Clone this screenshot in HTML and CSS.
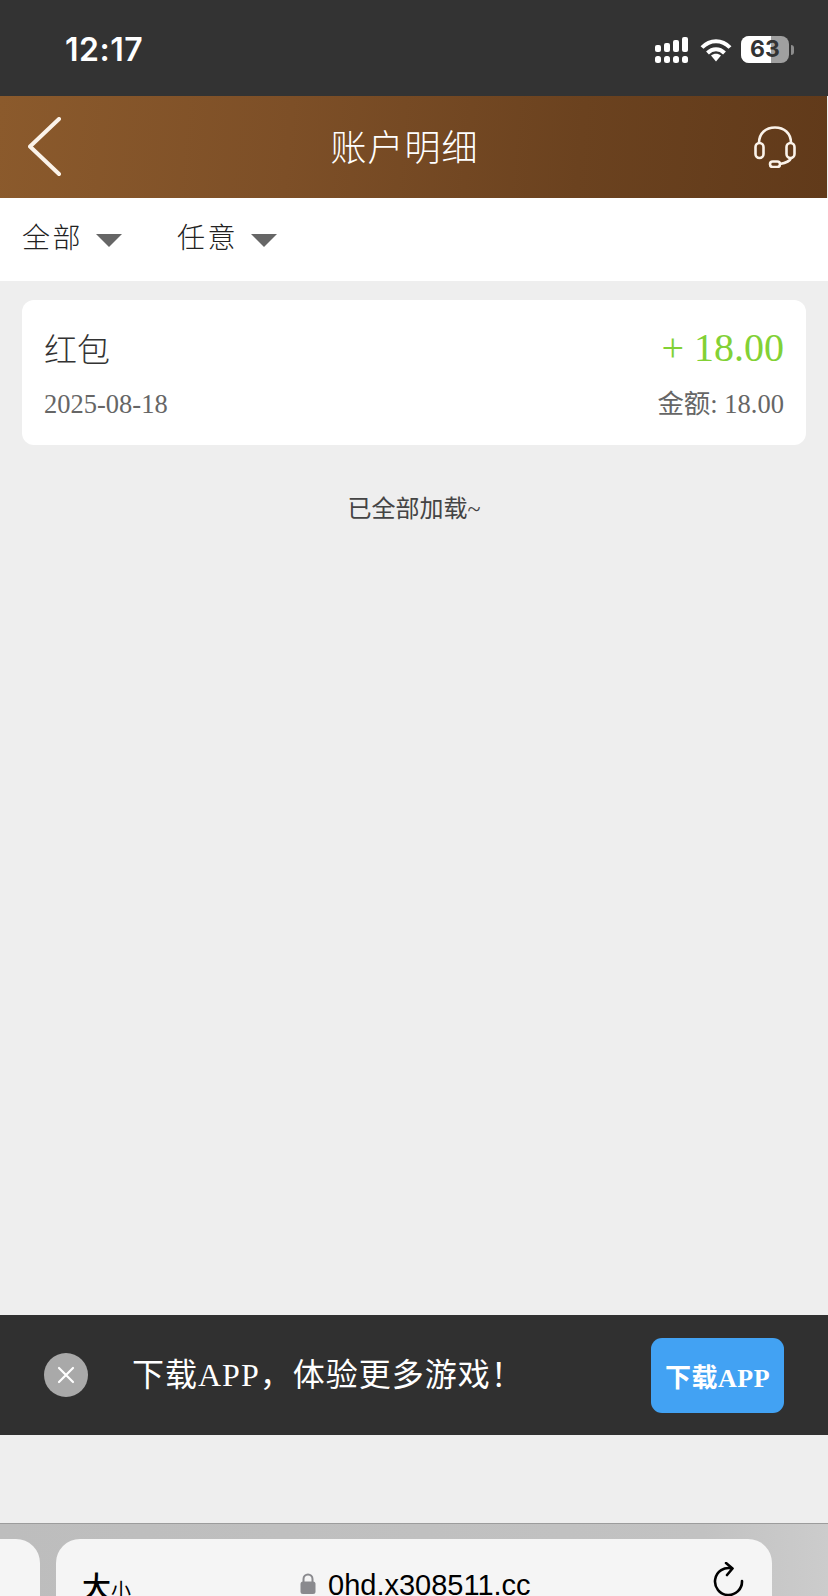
FILE: index.html
```html
<!DOCTYPE html>
<html lang="zh-CN">
<head>
  <meta charset="UTF-8" />
  <meta name="viewport" content="width=device-width, initial-scale=1.0"/>
  <title>账户明细</title>
  <link rel="stylesheet" href="styles.css">
</head>
<body>

  <!-- Phone status bar -->
  <div class="status-bar">
    <span class="time">12:17</span>
    <div class="status-icons">
      <svg class="icon-signal" width="33" height="26" viewBox="0 0 33 26" fill="#fff">
        <rect x="0" y="8" width="6" height="7" rx="2"/>
        <rect x="9" y="6" width="6" height="9" rx="2"/>
        <rect x="18" y="3" width="6" height="12" rx="2"/>
        <rect x="27" y="0" width="6" height="15" rx="2"/>
        <rect x="0" y="19" width="6" height="7" rx="2.5"/>
        <rect x="9" y="19" width="6" height="7" rx="2.5"/>
        <rect x="18" y="19" width="6" height="7" rx="2.5"/>
        <rect x="27" y="19" width="6" height="7" rx="2.5"/>
      </svg>
      <svg class="icon-wifi" width="32" height="24" viewBox="0 0 32 24" fill="none" stroke="#fff" stroke-width="4">
        <path d="M2 9.500C10 1 22 1 30 9.500"/>
        <path d="M7.500 15C12.500 10 19.500 10 24.500 15"/>
        <path d="M11 17.500L16 23.500L21 17.500C18 15 14 15 11 17.500Z" fill="#fff" stroke="none"/>
      </svg>
      <div class="battery">
        <div class="battery-body">
          <div class="battery-fill"></div>
          <span class="battery-num">63</span>
        </div>
        <div class="battery-nub"></div>
      </div>
    </div>
  </div>

  <!-- Page header -->
  <div class="header">
    <svg class="icon-back" width="34" height="60" viewBox="0 0 34 60" fill="none" stroke="#fbf3ea" stroke-width="4" stroke-linecap="round" stroke-linejoin="round">
      <path d="M31 2L2 29.500L31 57"/>
    </svg>
    <h1 class="title">账户明细</h1>
    <svg class="icon-service" width="42" height="42" viewBox="0 0 42 42" fill="none" stroke="#fbf3ea" stroke-width="2.6">
      <path d="M5 17C5 7 12 1.500 21 1.500S37 7 37 17"/>
      <rect x="1.500" y="17" width="8" height="15" rx="4"/>
      <rect x="32.500" y="17" width="8" height="15" rx="4"/>
      <path d="M37 32C36 35 32 37 26 38"/>
      <rect x="16" y="35.500" width="10" height="5.500" rx="2.750"/>
    </svg>
  </div>

  <!-- Filters -->
  <div class="filters">
    <div class="filter"><span>全部</span><i class="caret"></i></div>
    <div class="filter"><span>任意</span><i class="caret"></i></div>
  </div>

  <div class="content">
    <div class="card">
      <div class="card-row">
        <span class="card-name">红包</span>
        <span class="card-amount">+ 18.00</span>
      </div>
      <div class="card-row card-sub">
        <span>2025-08-18</span>
        <span>金额: 18.00</span>
      </div>
    </div>
    <p class="end-note">已全部加载~</p>
  </div>

  <!-- Download banner -->
  <div class="banner">
    <div class="banner-close">
      <svg width="20" height="20" viewBox="0 0 20 20" stroke="#fff" stroke-width="2.200" stroke-linecap="round">
        <path d="M3 3L17 17M17 3L3 17"/>
      </svg>
    </div>
    <span class="banner-text">下载APP，体验更多游戏！</span>
    <div class="banner-btn">下载APP</div>
  </div>

  <div class="spacer"></div>

  <!-- Browser address bar -->
  <div class="browser-bar">
    <div class="tab-prev"></div>
    <div class="tab-current">
      <span class="text-size"><b>大</b><small>小</small></span>
      <span class="address">
        <svg width="16" height="21" viewBox="0 0 16 21">
          <path d="M3.500 9V6a4.500 4.500 0 0 1 9 0v3" fill="none" stroke="#8a8a8e" stroke-width="2"/>
          <rect x="0.500" y="8.500" width="15" height="12.500" rx="2.500" fill="#8a8a8e"/>
        </svg>
        0hd.x308511.cc
      </span>
      <svg class="icon-reload" width="32" height="34" viewBox="0 0 32 34" fill="none" stroke="#000" stroke-width="2.600" stroke-linecap="round" stroke-linejoin="round">
        <path d="M19 6.500A13.500 13.500 0 1 0 29 19"/>
        <path d="M13 1L19.500 6.500L14 13"/>
      </svg>
    </div>
  </div>

</body>
</html>
```
FILE: styles.css
```css
* {
  box-sizing: border-box;
}
html, body {
  height: 100%;
}
body {
  margin: 0;
  height: 1596px;
  overflow: hidden;
  display: flex;
  flex-direction: column;
  background: #eeeeee;
  font-family: "Liberation Serif", "Noto Sans CJK SC", serif;
}

/* status bar */
.status-bar {
  height: 96px;
  flex: none;
  background: #333333;
  color: #fff;
  display: flex;
  align-items: center;
  justify-content: space-between;
  padding: 3px 34px 0 65px;
}
.time {
  font-family: Inter, "Liberation Sans", sans-serif;
  font-weight: 600;
  font-size: 32px;
  letter-spacing: 0.5px;
}
.status-icons {
  display: flex;
  align-items: center;
}
.icon-signal { margin-right: 12px; }
.icon-wifi { margin-right: 9px; }
.battery {
  display: flex;
  align-items: center;
  gap: 2px;
}
.battery-body {
  position: relative;
  width: 48px;
  height: 27px;
  border-radius: 8px;
  background: #a0a0a0;
  overflow: hidden;
  text-align: center;
}
.battery-fill {
  position: absolute;
  left: 0;
  top: 0;
  bottom: 0;
  width: 30px;
  background: #fff;
}
.battery-num {
  position: relative;
  font-family: Inter, "Liberation Sans", sans-serif;
  font-weight: 700;
  font-size: 23px;
  line-height: 27px;
  color: #333;
}
.battery-nub {
  width: 3px;
  height: 10px;
  background: #8c8c8c;
  border-radius: 0 3px 3px 0;
}

/* header */
.header {
  height: 102px;
  flex: none;
  margin-right: 1px;
  background: linear-gradient(95deg, #8b5a2c 0%, #7d4f27 35%, #6b421f 70%, #613a1a 100%);
  display: flex;
  align-items: center;
  justify-content: space-between;
  padding: 0 31px 0 28px;
  color: #fff;
}
.title {
  margin: 0 7px 4px 0;
  font-family: "Noto Sans CJK SC", sans-serif;
  font-weight: 300;
  font-size: 36px;
  letter-spacing: 1px;
}
.icon-service {
  margin-top: -1px;
}

/* filters */
.filters {
  height: 83px;
  flex: none;
  background: #fff;
  display: flex;
  align-items: center;
  gap: 55px;
  padding: 0 22px 7px;
}
.filter {
  display: flex;
  align-items: center;
  gap: 13px;
  font-family: "Noto Sans CJK SC", sans-serif;
  font-size: 28px;
  font-weight: 300;
  letter-spacing: 2.500px;
  color: #222;
}
.caret {
  width: 0;
  height: 0;
  margin-top: 8px;
  border-left: 13px solid transparent;
  border-right: 13px solid transparent;
  border-top: 13px solid #666;
}

/* list */
.content {
  flex: 1;
  padding: 19px 22px 0;
}
.card {
  height: 145px;
  width: 784px;
  background: #fff;
  border-radius: 12px;
  padding: 23px 22px 0;
}
.card-row {
  display: flex;
  justify-content: space-between;
  align-items: center;
}
.card-name {
  font-family: "Noto Sans CJK SC", sans-serif;
  font-size: 33px;
  font-weight: 300;
  line-height: 50px;
  color: #333;
}
.card-amount {
  font-size: 40px;
  line-height: 50px;
  color: #82d135;
}
.card-sub {
  margin-top: 13px;
  font-size: 26.500px;
  line-height: 36px;
  color: #666;
}
.end-note {
  margin: 46px 0 0;
  text-align: center;
  font-size: 24px;
  line-height: 36px;
  color: #444;
}

/* download banner */
.banner {
  height: 120px;
  flex: none;
  background: #303030;
  display: flex;
  align-items: center;
  padding: 0 44px;
  color: #fff;
}
.banner-close {
  width: 44px;
  height: 44px;
  border-radius: 50%;
  background: #a9a9a9;
  display: flex;
  align-items: center;
  justify-content: center;
}
.banner-text {
  flex: 1;
  margin: 0 0 7px 44px;
  font-size: 32px;
  letter-spacing: 1px;
}
.banner-btn {
  width: 133px;
  height: 75px;
  border-radius: 11px;
  background: #42a2f3;
  display: flex;
  align-items: center;
  justify-content: center;
  font-weight: 700;
  font-size: 26px;
  letter-spacing: 0.500px;
}
.spacer {
  height: 88px;
  flex: none;
}

/* browser bar, cut off by the bottom of the window */
.browser-bar {
  height: 73px;
  flex: none;
  border-top: 1px solid #9c9c9c;
  background: linear-gradient(90deg, #bdbdbd 0%, #c2c2c2 85%, #cccccc 100%);
  padding-top: 15px;
  display: flex;
  align-items: flex-start;
  font-family: Inter, "Liberation Sans", sans-serif;
  color: #000;
  overflow: hidden;
}
.tab-prev {
  width: 40px;
  height: 100px;
  flex: none;
  background: #f5f5f5;
  border-radius: 0 24px 0 0;
}
.tab-current {
  width: 716px;
  height: 100px;
  flex: none;
  margin-left: 16px;
  background: #f5f5f5;
  border-radius: 24px 24px 0 0;
  display: flex;
  align-items: flex-start;
  padding: 28px 27px 0 26px;
}
.text-size {
  width: 218px;
  flex: none;
  font-family: "Noto Sans CJK SC", sans-serif;
  line-height: 36px;
}
.text-size b {
  font-size: 29px;
  font-weight: 500;
}
.text-size small {
  font-size: 20px;
}
.address {
  flex: 1;
  display: flex;
  align-items: center;
  gap: 12px;
  font-family: "Liberation Sans", sans-serif;
  font-size: 29px;
  line-height: 36px;
}
.address svg {
  margin-top: -3px;
}
.icon-reload {
  margin-top: -5px;
}
```
